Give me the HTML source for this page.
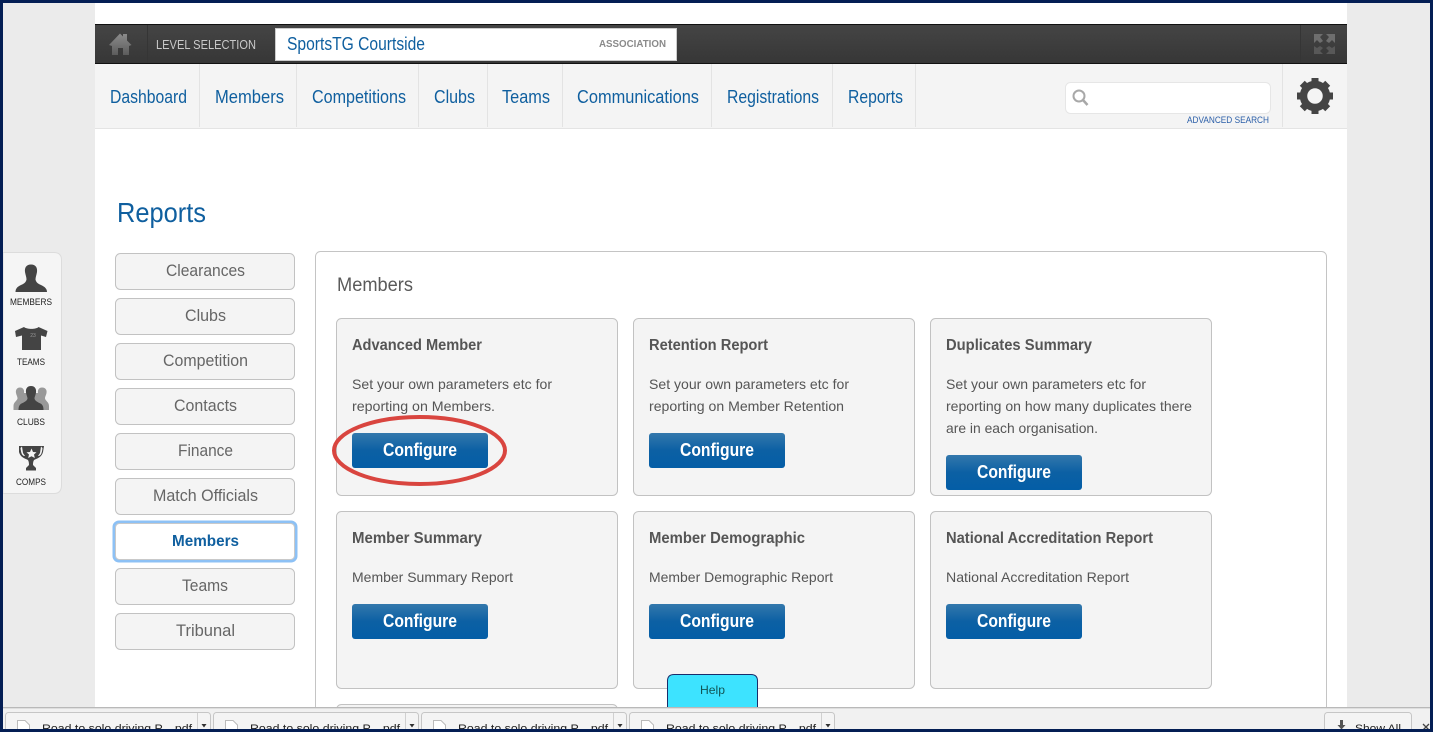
<!DOCTYPE html>
<html lang="en">
<head>
<meta charset="utf-8">
<title>Reports</title>
<style>
html,body{margin:0;padding:0;width:1433px;height:732px;overflow:hidden;background:#ebebeb}
svg{display:block;position:absolute;left:0;top:0}
text{font-family:"Liberation Sans",sans-serif;white-space:pre}
.nav{font-size:18.500px;fill:#0f5f9f}
.side{font-size:16.500px;fill:#666}
.ct{font-size:16px;font-weight:bold;fill:#555}
.cb{font-size:14px;fill:#555}
.cfg{font-size:18.500px;font-weight:bold;fill:#fff}
.lbl{font-size:9.500px;fill:#222}
.dl{font-size:11px;fill:#222}
.sb{fill:#f4f4f4;stroke:#c2c2c2;stroke-width:1}
.card{fill:#f4f4f4;stroke:#c2c2c2;stroke-width:1}
</style>
</head>
<body>
<svg width="1433" height="732" viewBox="0 0 1433 732" xmlns="http://www.w3.org/2000/svg">
<defs>
<linearGradient id="btn" x1="0" y1="0" x2="0" y2="1"><stop offset="0" stop-color="#3378ac"/><stop offset=".5" stop-color="#0c60a4"/><stop offset="1" stop-color="#045ea6"/></linearGradient>
<linearGradient id="bar" x1="0" y1="0" x2="0" y2="1"><stop offset="0" stop-color="#454545"/><stop offset="1" stop-color="#363636"/></linearGradient>
<linearGradient id="ico" x1="0" y1="0" x2="0" y2="1"><stop offset="0" stop-color="#8c8c8c"/><stop offset="1" stop-color="#5c5c5c"/></linearGradient>
</defs>

<rect width="1433" height="732" fill="#ebebeb"/>
<rect x="95" y="0" width="1252" height="732" fill="#fff"/>

<!-- dark bar -->
<rect x="95" y="24" width="1252" height="40" fill="url(#bar)"/>
<rect x="95" y="24" width="1252" height="1" fill="#111"/>
<rect x="95" y="63" width="1252" height="1" fill="#111"/>
<rect x="147" y="25" width="1" height="38" fill="#353535"/>
<rect x="1300" y="25" width="1" height="38" fill="#353535"/>
<path d="M109 45 L120 33.500 L123 36.500 V34 H127 V40.500 L131.500 45 L129 46 V55 H123 V48 H118 V55 H112 V46 Z" fill="url(#ico)"/>
<text x="156" y="49" font-size="13" fill="#c9c9c9" textLength="100" lengthAdjust="spacingAndGlyphs">LEVEL SELECTION</text>
<rect x="275" y="28" width="402" height="33" fill="#fff"/>
<rect x="275.500" y="28.500" width="401" height="32" fill="none" stroke="#ccc"/>
<text x="287" y="50" font-size="18" fill="#0f5f9f" textLength="138" lengthAdjust="spacingAndGlyphs">SportsTG Courtside</text>
<text x="599" y="47" font-size="10.500" font-weight="bold" fill="#8a8a8a" textLength="67" lengthAdjust="spacingAndGlyphs">ASSOCIATION</text>
<g fill="#6e6e6e">
<path d="M1314 34 H1323 L1320 37 L1323 41 L1320 43 L1317 40 L1314 43 Z"/>
<path d="M1335 34 H1326 L1329 37 L1326 41 L1329 43 L1332 40 L1335 43 Z"/>
<path d="M1314 54 H1323 L1320 51 L1323 48 L1320 46 L1317 48 L1314 46 Z" fill="#585858"/>
<path d="M1335 54 H1326 L1329 51 L1326 48 L1329 46 L1332 48 L1335 46 Z" fill="#585858"/>
</g>

<!-- nav -->
<rect x="95" y="64" width="1252" height="64" fill="#f4f4f4"/>
<rect x="95" y="128" width="1252" height="1" fill="#e4e4e4"/>
<g fill="#e3e3e3">
<rect x="199" y="64" width="1" height="63"/><rect x="296" y="64" width="1" height="63"/><rect x="418" y="64" width="1" height="63"/><rect x="487" y="64" width="1" height="63"/><rect x="562" y="64" width="1" height="63"/><rect x="711" y="64" width="1" height="63"/><rect x="832" y="64" width="1" height="63"/><rect x="915" y="64" width="1" height="63"/><rect x="1282" y="64" width="1" height="63"/>
</g>
<text class="nav" x="110" y="103" textLength="77" lengthAdjust="spacingAndGlyphs">Dashboard</text>
<text class="nav" x="215" y="103" textLength="69" lengthAdjust="spacingAndGlyphs">Members</text>
<text class="nav" x="312" y="103" textLength="94" lengthAdjust="spacingAndGlyphs">Competitions</text>
<text class="nav" x="434" y="103" textLength="41" lengthAdjust="spacingAndGlyphs">Clubs</text>
<text class="nav" x="502" y="103" textLength="48" lengthAdjust="spacingAndGlyphs">Teams</text>
<text class="nav" x="577" y="103" textLength="122" lengthAdjust="spacingAndGlyphs">Communications</text>
<text class="nav" x="727" y="103" textLength="92" lengthAdjust="spacingAndGlyphs">Registrations</text>
<text class="nav" x="848" y="103" textLength="55" lengthAdjust="spacingAndGlyphs">Reports</text>

<rect x="1065.500" y="82.500" width="205" height="31" rx="5" fill="#fff" stroke="#e6e6e6"/>
<circle cx="1079" cy="96" r="5.500" fill="none" stroke="#a8a8a8" stroke-width="2"/>
<path d="M1083 100 L1087.500 105" stroke="#a8a8a8" stroke-width="2.500" fill="none"/>
<text x="1187" y="123" font-size="9.500" fill="#2a5ea8" textLength="82" lengthAdjust="spacingAndGlyphs">ADVANCED SEARCH</text>

<g transform="translate(1315 96)" fill="#444">
<circle r="11.500" fill="none" stroke="#444" stroke-width="7.500"/>
<rect x="-3.500" y="-18" width="7" height="6"/>
<rect x="-3.500" y="-18" width="7" height="6" transform="rotate(45)"/>
<rect x="-3.500" y="-18" width="7" height="6" transform="rotate(90)"/>
<rect x="-3.500" y="-18" width="7" height="6" transform="rotate(135)"/>
<rect x="-3.500" y="-18" width="7" height="6" transform="rotate(180)"/>
<rect x="-3.500" y="-18" width="7" height="6" transform="rotate(225)"/>
<rect x="-3.500" y="-18" width="7" height="6" transform="rotate(270)"/>
<rect x="-3.500" y="-18" width="7" height="6" transform="rotate(315)"/>
</g>

<text x="117" y="222" font-size="28" fill="#0f5f9f" textLength="89" lengthAdjust="spacingAndGlyphs">Reports</text>

<!-- left floating panel -->
<path d="M3 252.500 H54 Q61.500 252.500 61.500 260 V485 Q61.500 493.500 54 493.500 H3 Z" fill="#f5f5f5" stroke="#dcdcdc"/>
<path d="M31 264.500 C26 264.500 24.500 268 25 272 C25.500 275 26.500 277 26.500 279.500 C26 282.500 23.500 284 20 285.500 C17 287 15.500 289 15.500 292 H47 C47 289 45 287 42 285.500 C38.500 284 36 282.500 35.500 279.500 C35.500 277 36.500 275 37 272 C37.500 268 36 264.500 31 264.500 Z" fill="#444"/>
<text class="lbl" x="10" y="305" textLength="42" lengthAdjust="spacingAndGlyphs">MEMBERS</text>
<path d="M24 327 L15 331 L16 337 L22 335.500 V350 H41 V335.500 L46 337 L47.500 331 L38.500 327 C36 329.500 27 329.500 24 327 Z" fill="#444"/>
<text x="33" y="337" font-size="5" fill="#999" text-anchor="middle">23</text>
<text class="lbl" x="17" y="365" textLength="28" lengthAdjust="spacingAndGlyphs">TEAMS</text>
<path d="M20 387.500 C16.500 387.500 15.500 390.500 16 393 C16.500 395.500 17.500 396.500 17.500 398.500 C17 401 13.500 402 13.500 406 V410 H49 V406 C49 402 45.500 401 45 398.500 C45 396.500 46 395.500 46.500 393 C47 390.500 46 387.500 42 387.500 C38.500 387.500 37.500 390.500 38 393 L24 393 C24.500 390.500 23.500 387.500 20 387.500 Z" fill="#999"/>
<path d="M31 386 C27 386 25.500 389 26 392.500 C26.500 395.500 27.500 397 27.500 398.500 C27 401 24.500 402 21.500 403.500 C19.500 404.500 18.500 406.500 18.500 410 H43.500 C43.500 406.500 42.500 404.500 40.500 403.500 C37.500 402 35 401 34.500 398.500 C34.500 397 35.500 395.500 36 392.500 C36.500 389 35 386 31 386 Z" fill="#444"/>
<text class="lbl" x="17" y="425" textLength="28" lengthAdjust="spacingAndGlyphs">CLUBS</text>
<path d="M19 446 H44 L43 452 C42 456 39 458 35 459.500 C33.500 460 33 462 33 465 L36 468 V470.500 H26 V468 L29 465 C29 462 28.500 460 27 459.500 C23 458 20 456 19 452 Z" fill="#444"/>
<path d="M31.500 448.500 L33 452 L36.500 452.300 L34 454.500 L34.800 458 L31.500 456.200 L28.200 458 L29 454.500 L26.500 452.300 L30 452 Z" fill="#f5f5f5"/>
<path d="M22 446.500 L23 453 L25 456 H24 C21.500 455 21 452 20.500 448 Z M41 446.500 L40 453 L38 456 H39 C41.500 455 42 452 42.500 448 Z" fill="#f5f5f5"/>
<text class="lbl" x="16" y="485" textLength="30" lengthAdjust="spacingAndGlyphs">COMPS</text>

<!-- side menu -->
<rect class="sb" x="115.500" y="253.500" width="179" height="36" rx="5"/>
<rect class="sb" x="115.500" y="298.500" width="179" height="36" rx="5"/>
<rect class="sb" x="115.500" y="343.500" width="179" height="36" rx="5"/>
<rect class="sb" x="115.500" y="388.500" width="179" height="36" rx="5"/>
<rect class="sb" x="115.500" y="433.500" width="179" height="36" rx="5"/>
<rect class="sb" x="115.500" y="478.500" width="179" height="36" rx="5"/>
<rect x="114" y="522" width="182" height="39" rx="5" fill="#fff" stroke="#8dc1f5" stroke-width="3"/>
<rect x="115.500" y="523.500" width="179" height="36" rx="4" fill="#fff" stroke="#c9c9c9"/>
<rect class="sb" x="115.500" y="568.500" width="179" height="36" rx="5"/>
<rect class="sb" x="115.500" y="613.500" width="179" height="36" rx="5"/>
<text class="side" x="166" y="276" textLength="79" lengthAdjust="spacingAndGlyphs">Clearances</text>
<text class="side" x="185" y="321" textLength="41" lengthAdjust="spacingAndGlyphs">Clubs</text>
<text class="side" x="163" y="366" textLength="85" lengthAdjust="spacingAndGlyphs">Competition</text>
<text class="side" x="174" y="411" textLength="63" lengthAdjust="spacingAndGlyphs">Contacts</text>
<text class="side" x="178" y="456" textLength="55" lengthAdjust="spacingAndGlyphs">Finance</text>
<text class="side" x="153" y="501" textLength="105" lengthAdjust="spacingAndGlyphs">Match Officials</text>
<text x="172" y="546" font-size="16" font-weight="bold" fill="#0f5f9f" textLength="67" lengthAdjust="spacingAndGlyphs">Members</text>
<text class="side" x="182" y="591" textLength="46" lengthAdjust="spacingAndGlyphs">Teams</text>
<text class="side" x="176" y="636" textLength="59" lengthAdjust="spacingAndGlyphs">Tribunal</text>

<!-- main panel -->
<rect x="315.500" y="251.500" width="1011" height="500" rx="5" fill="#fff" stroke="#c4c4c4"/>
<text x="337" y="291" font-size="19" fill="#5a5a5a" textLength="76" lengthAdjust="spacingAndGlyphs">Members</text>

<rect class="card" x="336.500" y="318.500" width="281" height="177" rx="5"/>
<rect class="card" x="633.500" y="318.500" width="281" height="177" rx="5"/>
<rect class="card" x="930.500" y="318.500" width="281" height="177" rx="5"/>
<rect class="card" x="336.500" y="511.500" width="281" height="177" rx="5"/>
<rect class="card" x="633.500" y="511.500" width="281" height="177" rx="5"/>
<rect class="card" x="930.500" y="511.500" width="281" height="177" rx="5"/>
<rect class="card" x="336.500" y="704.500" width="281" height="60" rx="5"/>

<text class="ct" x="352" y="350" textLength="130" lengthAdjust="spacingAndGlyphs">Advanced Member</text>
<text class="ct" x="649" y="350" textLength="119" lengthAdjust="spacingAndGlyphs">Retention Report</text>
<text class="ct" x="946" y="350" textLength="146" lengthAdjust="spacingAndGlyphs">Duplicates Summary</text>
<text class="ct" x="352" y="543" textLength="130" lengthAdjust="spacingAndGlyphs">Member Summary</text>
<text class="ct" x="649" y="543" textLength="156" lengthAdjust="spacingAndGlyphs">Member Demographic</text>
<text class="ct" x="946" y="543" textLength="207" lengthAdjust="spacingAndGlyphs">National Accreditation Report</text>

<text class="cb" x="352" y="389" textLength="200" lengthAdjust="spacingAndGlyphs">Set your own parameters etc for</text>
<text class="cb" x="352" y="411" textLength="143" lengthAdjust="spacingAndGlyphs">reporting on Members.</text>
<text class="cb" x="649" y="389" textLength="200" lengthAdjust="spacingAndGlyphs">Set your own parameters etc for</text>
<text class="cb" x="649" y="411" textLength="195" lengthAdjust="spacingAndGlyphs">reporting on Member Retention</text>
<text class="cb" x="946" y="389" textLength="200" lengthAdjust="spacingAndGlyphs">Set your own parameters etc for</text>
<text class="cb" x="946" y="411" textLength="246" lengthAdjust="spacingAndGlyphs">reporting on how many duplicates there</text>
<text class="cb" x="946" y="433" textLength="152" lengthAdjust="spacingAndGlyphs">are in each organisation.</text>
<text class="cb" x="352" y="582" textLength="161" lengthAdjust="spacingAndGlyphs">Member Summary Report</text>
<text class="cb" x="649" y="582" textLength="184" lengthAdjust="spacingAndGlyphs">Member Demographic Report</text>
<text class="cb" x="946" y="582" textLength="183" lengthAdjust="spacingAndGlyphs">National Accreditation Report</text>

<rect x="352" y="433" width="136" height="35" rx="3" fill="url(#btn)"/>
<rect x="649" y="433" width="136" height="35" rx="3" fill="url(#btn)"/>
<rect x="946" y="455" width="136" height="35" rx="3" fill="url(#btn)"/>
<rect x="352" y="604" width="136" height="35" rx="3" fill="url(#btn)"/>
<rect x="649" y="604" width="136" height="35" rx="3" fill="url(#btn)"/>
<rect x="946" y="604" width="136" height="35" rx="3" fill="url(#btn)"/>
<text class="cfg" x="383" y="456" textLength="74" lengthAdjust="spacingAndGlyphs">Configure</text>
<text class="cfg" x="680" y="456" textLength="74" lengthAdjust="spacingAndGlyphs">Configure</text>
<text class="cfg" x="977" y="478" textLength="74" lengthAdjust="spacingAndGlyphs">Configure</text>
<text class="cfg" x="383" y="627" textLength="74" lengthAdjust="spacingAndGlyphs">Configure</text>
<text class="cfg" x="680" y="627" textLength="74" lengthAdjust="spacingAndGlyphs">Configure</text>
<text class="cfg" x="977" y="627" textLength="74" lengthAdjust="spacingAndGlyphs">Configure</text>

<ellipse cx="419.500" cy="450.500" rx="85.500" ry="33.500" fill="none" stroke="#d9453f" stroke-width="4"/>

<!-- help -->
<path d="M667.500 710 V681 Q667.500 674.500 674 674.500 H751 Q757.500 674.500 757.500 681 V710 Z" fill="#3de3ff" stroke="#1a2c6a"/>
<text x="700" y="694" font-size="12" fill="#155" textLength="25" lengthAdjust="spacingAndGlyphs">Help</text>

<!-- download bar -->
<rect x="3" y="707" width="1427" height="25" fill="#f1f1f1"/>
<rect x="3" y="707" width="1427" height="1" fill="#b9b9b9"/>
<rect x="3" y="708" width="1427" height="1" fill="#dedede"/>
<g fill="#f4f4f4" stroke="#c6c6c6">
<rect x="5.500" y="712.500" width="205" height="30" rx="3"/>
<rect x="213.500" y="712.500" width="205" height="30" rx="3"/>
<rect x="421.500" y="712.500" width="205" height="30" rx="3"/>
<rect x="629.500" y="712.500" width="205" height="30" rx="3"/>
<rect x="1324.500" y="712.500" width="87" height="30" rx="3"/>
</g>
<g fill="#d0d0d0">
<rect x="197" y="713" width="1" height="18"/><rect x="405" y="713" width="1" height="18"/><rect x="613" y="713" width="1" height="18"/><rect x="821" y="713" width="1" height="18"/>
</g>
<g fill="#fff" stroke="#bbb">
<path d="M17.500 731 V720.500 H25 L29.500 725 V731 Z"/>
<path d="M225.500 731 V720.500 H233 L237.500 725 V731 Z"/>
<path d="M433.500 731 V720.500 H441 L445.500 725 V731 Z"/>
<path d="M641.500 731 V720.500 H649 L653.500 725 V731 Z"/>
</g>
<g fill="#333">
<path d="M201.500 724 H206.500 L204 727.500 Z"/>
<path d="M409.500 724 H414.500 L412 727.500 Z"/>
<path d="M617.500 724 H622.500 L620 727.500 Z"/>
<path d="M825.500 724 H830.500 L828 727.500 Z"/>
<path d="M1340 720 H1343 V725 H1345.500 L1341.500 729.500 L1337.500 725 H1340 Z" fill="#555"/>
</g>
<text class="dl" x="42" y="732" textLength="150" lengthAdjust="spacingAndGlyphs">Road to solo driving P....pdf</text>
<text class="dl" x="250" y="732" textLength="150" lengthAdjust="spacingAndGlyphs">Road to solo driving P....pdf</text>
<text class="dl" x="458" y="732" textLength="150" lengthAdjust="spacingAndGlyphs">Road to solo driving P....pdf</text>
<text class="dl" x="666" y="732" textLength="150" lengthAdjust="spacingAndGlyphs">Road to solo driving P....pdf</text>
<text class="dl" x="1355" y="732" textLength="46" lengthAdjust="spacingAndGlyphs">Show All</text>
<path d="M1423 724 L1429 730 M1429 724 L1423 730" stroke="#444" stroke-width="1.300" fill="none"/>

<!-- frame -->
<rect x="0" y="0" width="1433" height="3" fill="#041e54"/>
<rect x="0" y="0" width="3" height="732" fill="#041e54"/>
<rect x="1430" y="0" width="3" height="732" fill="#041e54"/>
<rect x="0" y="729" width="1433" height="3" fill="#041e54"/>
</svg>
</body>
</html>
